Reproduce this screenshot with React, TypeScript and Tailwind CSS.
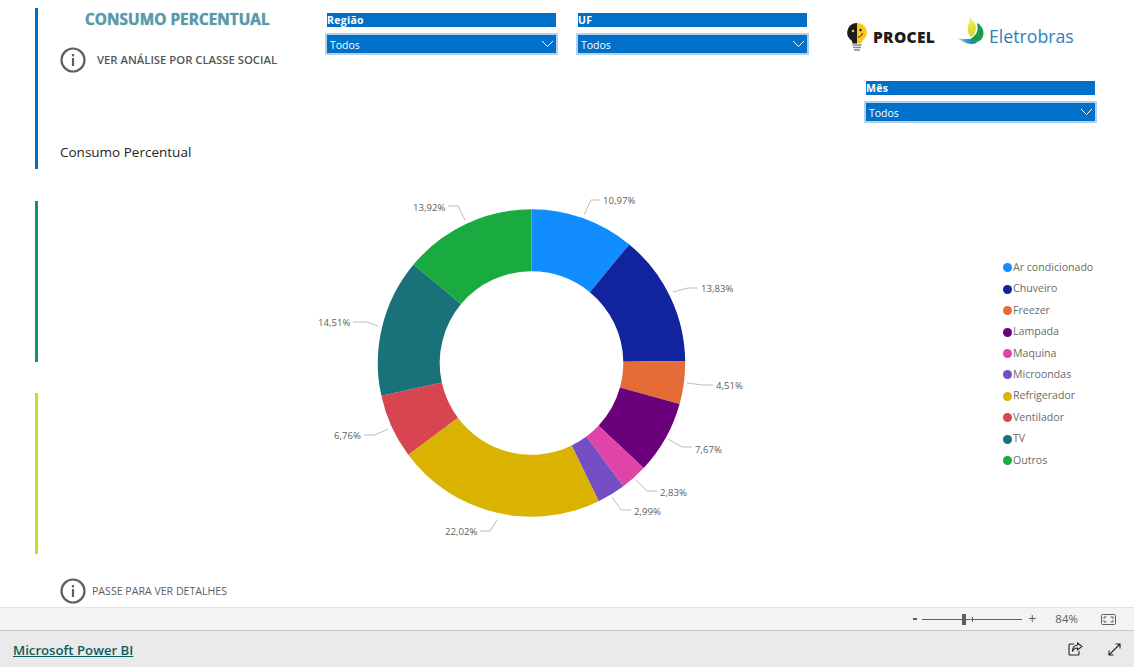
const sans = "font-['Open_Sans',sans-serif]";

// start angle runs clockwise from the top of the donut
const slices = [
  { name: "Ar condicionado", value: 10.97, color: "#118DFF", label: "10,97%", x: 603, y: 204, line: "584,215 591,200 600,200" },
  { name: "Chuveiro", value: 13.83, color: "#12239E", label: "13,83%", x: 701, y: 292, line: "673,292 688,288 698,288" },
  { name: "Freezer", value: 4.51, color: "#E66C37", label: "4,51%", x: 716, y: 389, line: "687,383 703,385 713,385" },
  { name: "Lampada", value: 7.67, color: "#6B007B", label: "7,67%", x: 695, y: 453, line: "668,439 682,447 692,447" },
  { name: "Maquina", value: 2.83, color: "#E044A7", label: "2,83%", x: 660, y: 496, line: "636,480 647,491 657,491" },
  { name: "Microondas", value: 2.99, color: "#744EC2", label: "2,99%", x: 634, y: 515, line: "612,497 621,510 631,510" },
  { name: "Refrigerador", value: 22.02, color: "#D9B300", label: "22,02%", x: 445, y: 535, line: "497,520 490,531 480,531" },
  { name: "Ventilador", value: 6.76, color: "#D64550", label: "6,76%", x: 334, y: 439, line: "388,429 375,435 364,435" },
  { name: "TV", value: 14.51, color: "#197278", label: "14,51%", x: 318, y: 326, line: "378,326 367,322 353,322" },
  { name: "Outros", value: 13.92, color: "#1AAB40", label: "13,92%", x: 413, y: 211, line: "465,220 458,206 448,206" },
];

const CX = 531.5;
const CY = 363;
const R = 153.7;
const r = 91.8;

function arc(start: number, end: number) {
  const pt = (rad: number, t: number) => {
    const a = (t / 100) * Math.PI * 2;
    return `${(CX + rad * Math.sin(a)).toFixed(2)} ${(CY - rad * Math.cos(a)).toFixed(2)}`;
  };
  const big = end - start > 50 ? 1 : 0;
  return `M${pt(R, start)} A${R} ${R} 0 ${big} 1 ${pt(R, end)} L${pt(r, end)} A${r} ${r} 0 ${big} 0 ${pt(r, start)} Z`;
}

function Donut() {
  let acc = 0;
  const total = slices.reduce((s, x) => s + x.value, 0);
  return (
    <svg width="460" height="400" viewBox="300 170 460 400" className="shrink-0">
      {slices.map((s) => {
        const start = acc;
        acc += (s.value / total) * 100;
        return <path key={s.name} d={arc(start, acc)} fill={s.color} />;
      })}
      {slices.map((s) => (
        <g key={s.label}>
          <polyline points={s.line} fill="none" stroke="#bdbdbd" strokeWidth="1" />
          <text x={s.x} y={s.y} fontSize="9.6" fill="#605e5c" fontFamily="'Open Sans', sans-serif">
            {s.label}
          </text>
        </g>
      ))}
    </svg>
  );
}

function InfoIcon() {
  return (
    <svg width="26" height="26" viewBox="0 0 26 26" className="shrink-0">
      <circle cx="13" cy="13" r="11.5" fill="none" stroke="#5f5f5f" strokeWidth="2.2" />
      <rect x="11.9" y="11" width="2.2" height="8" fill="#5f5f5f" />
      <rect x="11.9" y="7" width="2.2" height="2.4" fill="#5f5f5f" />
    </svg>
  );
}

function Slicer({ title, className }: { title: string; className: string }) {
  return (
    <div className={`w-[233px] flex flex-col ${className}`}>
      <div className="mx-[2px] h-[14px] bg-[#0070c8] text-white text-[10.5px] font-bold leading-[14px] tracking-[0.3px]">
        {title}
      </div>
      <div className="mt-[6px] h-[22px] bg-[#0070c8] border-2 border-[#b4d0ea] flex items-center justify-between pl-[3px] pr-[2px] text-white text-[10.5px]">
        <span className="pt-[3px]">Todos</span>
        <svg width="13" height="8" viewBox="0 0 13 8">
          <path d="M1 1l5.5 5.5L12 1" fill="none" stroke="#ffffff" strokeWidth="1" />
        </svg>
      </div>
    </div>
  );
}

function ProcelBulb() {
  return (
    <svg width="20" height="30" viewBox="0 0 20 30" className="shrink-0">
      <path d="M10 0a9.5 9.5 0 0 0-6 17c1 1 1.400 2 1.500 3.500h4.500z" fill="#1c1c1c" />
      <path d="M10 0a9.500 9.500 0 0 1 6 17c-1 1-1.400 2-1.500 3.500H10z" fill="#f6c91c" />
      <circle cx="6" cy="8" r="1.300" fill="#f6c91c" />
      <circle cx="13.500" cy="7" r="1.200" fill="#1c1c1c" />
      <path d="M11 14c2 0 4-1.500 4.500-4" fill="none" stroke="#1c1c1c" strokeWidth="1" />
      <path d="M5.500 22h9M6 24.500h8M7 27h6" stroke="#8a8a8a" strokeWidth="1.400" />
    </svg>
  );
}

function EletrobrasMark() {
  return (
    <svg width="28" height="31" viewBox="0 0 28 31" className="shrink-0">
      <defs>
        <linearGradient id="wave" x1="0" x2="1" y1="0" y2="0">
          <stop offset="0" stopColor="#d6e9f7" />
          <stop offset="0.45" stopColor="#3f97d6" />
          <stop offset="1" stopColor="#0a5fa8" />
        </linearGradient>
        <linearGradient id="flame" x1="0" x2="0" y1="0" y2="1">
          <stop offset="0" stopColor="#f8f6c8" />
          <stop offset="0.5" stopColor="#e6e23c" />
          <stop offset="1" stopColor="#c5d92d" />
        </linearGradient>
      </defs>
      <path d="M14 1C15 6 21 9 20 15C19.500 19 17 22 15 23C12 20 11 16 12 12C13 8 14 5 14 1Z" fill="url(#flame)" />
      <path d="M21 9C25 11 27.500 15 27.500 19C27.500 24 24 28 20 28C17 28 15.500 27 14 25C18 23 21.500 19 21.500 15C21.500 13 21.500 11 21 9Z" fill="#1a9a48" />
      <path d="M1 24C6 25 10 25 14 25C16 27.500 19 28.500 22 28C19 30 15 30.500 12 29.500C8 28.500 4 26 1 24Z" fill="url(#wave)" />
    </svg>
  );
}

function FitIcon() {
  return (
    <svg width="15" height="11" viewBox="0 0 15 11">
      <rect x="0.5" y="0.5" width="14" height="10" rx="1" fill="none" stroke="#605e5c" />
      <path d="M3 5V3h2.500M12 5V3H9.500M3 6v2h2.500M12 6v2H9.500" fill="none" stroke="#605e5c" />
    </svg>
  );
}

function ShareIcon() {
  return (
    <svg width="15" height="14" viewBox="0 0 15 14">
      <path d="M6 2H2a1 1 0 0 0-1 1v9a1 1 0 0 0 1 1h8a1 1 0 0 0 1-1V9" fill="none" stroke="#252423" strokeWidth="1.100" />
      <path d="M9.500 1l4.500 3.500-4.500 3.500V6C7 6 5.500 7 4.500 9.500 4.500 6 6.500 3.300 9.500 3z" fill="none" stroke="#252423" strokeWidth="1.100" />
    </svg>
  );
}

function ExpandIcon() {
  return (
    <svg width="13" height="13" viewBox="0 0 13 13">
      <path d="M1 12L12 1M7.500 1H12v4.500M1 7.500V12h4.500" fill="none" stroke="#252423" strokeWidth="1.100" />
    </svg>
  );
}

export default function App() {
  return (
    <div className={`w-[1134px] h-[667px] flex flex-col overflow-hidden bg-white ${sans}`}>
      <div className="h-[607px] flex">
        {/* coloured rails */}
        <div className="w-[60px] shrink-0 pl-[35px] pt-[8px] flex flex-col">
          <div className="w-[3px] h-[161px] bg-[#0070c8]" />
          <div className="mt-[32px] w-[3px] h-[161px] bg-[#0b9a5b]" />
          <div className="mt-[31px] w-[3px] h-[161px] bg-[#c8da30]" />
        </div>

        <div className="flex-1 flex flex-col min-w-0">
          <div className="h-[170px] flex">
            <div className="w-[265px] shrink-0 flex flex-col">
              <h1 className="mt-[9px] ml-[25px] h-[22px] leading-[22px] text-[15.4px] font-bold text-[#5b9aa9] whitespace-nowrap [text-shadow:0_0_1px_#5b9aa9]">
                CONSUMO PERCENTUAL
              </h1>
              <div className="mt-[16px] flex items-center">
                <InfoIcon />
                <span className="ml-[11px] pt-[1px] text-[11.3px] font-semibold text-[#555555] whitespace-nowrap">
                  VER ANÁLISE POR CLASSE SOCIAL
                </span>
              </div>
              <p className="mt-[70px] text-[13.5px] leading-[18px] text-[#252423] whitespace-nowrap">
                Consumo Percentual
              </p>
            </div>

            <div className="flex-1 flex min-w-0">
              <Slicer title="Região" className="mt-[13px]" />
              <Slicer title="UF" className="ml-[18px] mt-[13px]" />
              <div className="ml-[38px] flex flex-col">
                <div className="h-[68px] flex items-start">
                  <div className="mt-[23px] flex">
                    <ProcelBulb />
                  </div>
                  <span className="mt-[27px] ml-[6px] w-[83px] text-[15.5px] leading-[20px] font-extrabold text-[#1c1c1c] tracking-[0.3px]">
                    PROCEL
                  </span>
                  <div className="mt-[14px] flex">
                    <EletrobrasMark />
                  </div>
                  <span className="mt-[24px] ml-[5px] text-[17.7px] leading-[24px] text-[#2b7fc0]">Eletrobras</span>
                </div>
                <Slicer title="Mês" className="ml-[17px] mt-[13px]" />
              </div>
            </div>
          </div>

          <div className="h-[400px] flex">
            <div className="ml-[240px] shrink-0">
              <Donut />
            </div>
            <ul className="ml-[243px] pt-[87px] flex flex-col">
              {slices.map((s) => (
                <li key={s.name} className="h-[21.44px] flex items-center whitespace-nowrap">
                  <span className="w-[9px] h-[9px] mr-[1px] rounded-full" style={{ backgroundColor: s.color }} />
                  <span className="text-[10.6px] text-[#6b6b6b]">{s.name}</span>
                </li>
              ))}
            </ul>
          </div>

          <div className="mt-[8px] flex items-center">
            <InfoIcon />
            <span className="ml-[6px] pt-[1px] text-[10.6px] text-[#605e5c] whitespace-nowrap">PASSE PARA VER DETALHES</span>
          </div>
        </div>
      </div>

      {/* zoom bar */}
      <div className="h-[24px] bg-[#f3f3f3] border-t border-b border-t-[#e3e3e3] border-b-[#c8c8c8] flex items-center justify-end pr-[18px] text-[#605e5c]">
        <span className="w-[4px] h-[2px] bg-[#605e5c]" />
        <div className="relative ml-[5px] w-[100px] h-[1px] bg-[#605e5c]">
          <span className="absolute left-[40px] top-[-5px] w-[4px] h-[11px] bg-[#605e5c]" />
          <span className="absolute left-[50px] top-[-2px] w-[1px] h-[5px] bg-[#605e5c]" />
        </div>
        <span className="ml-[6px] text-[14px] leading-none">+</span>
        <span className="ml-[19px] text-[11.5px]">84%</span>
        <span className="ml-[23px] flex">
          <FitIcon />
        </span>
      </div>

      {/* footer */}
      <div className="flex-1 bg-[#eaeaea] flex items-center pl-[13px] pr-[13px]">
        <a href="#" className="pt-[4px] text-[13.2px] font-semibold text-[#0f5c5c] underline">
          Microsoft Power BI
        </a>
        <span className="ml-auto flex">
          <ShareIcon />
        </span>
        <span className="ml-[25px] flex">
          <ExpandIcon />
        </span>
      </div>
    </div>
  );
}
